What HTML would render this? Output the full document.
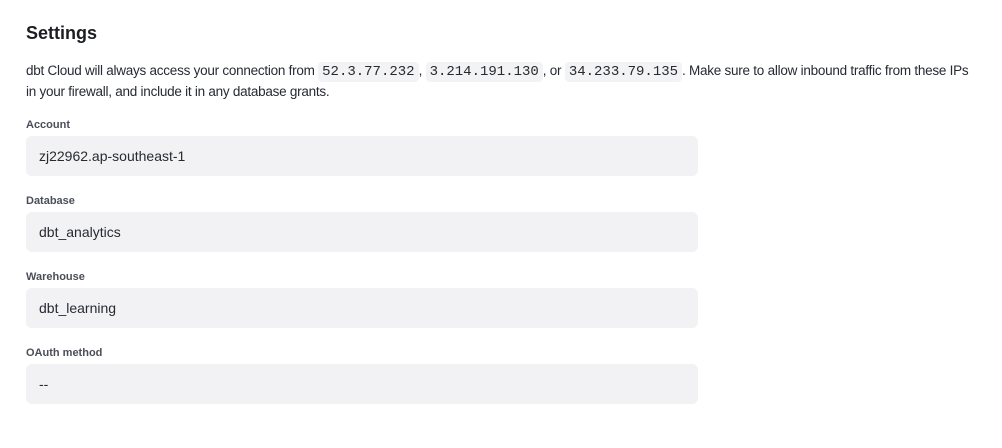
<!DOCTYPE html>
<html><head><style>
body{margin:0;background:#fff;font-family:"Liberation Sans",sans-serif;color:#1c1e21;}
.wrap{position:absolute;left:26px;top:0;width:980px}
h1{position:absolute;top:23px;left:0;margin:0;font-size:18px;font-weight:bold;color:#1c1e21}
.p{position:absolute;top:61px;left:0;font-size:13.5px;line-height:20px;letter-spacing:-0.25px;color:#262a33;white-space:nowrap}
code{font-family:"Liberation Mono",monospace;font-size:14px;background:#f3f3f5;border-radius:4px;padding:2px 4px;color:#262a33;letter-spacing:0}
.l{position:absolute;left:0;font-size:11px;font-weight:bold;color:#4a4f57}
.i{position:absolute;left:0;width:672px;height:40px;background:#f2f2f4;border-radius:6px;font-size:14px;line-height:40px;box-sizing:border-box;padding-left:13px;color:#262a33}
</style></head><body><div class="wrap">
<h1>Settings</h1>
<div class="p">dbt Cloud will always access your connection from <code>52.3.77.232</code>, <code>3.214.191.130</code>, or <code>34.233.79.135</code>. Make sure to allow inbound traffic from these IPs<br>in your firewall, and include it in any database grants.</div>
<div class="l" style="top:119px">Account</div><div class="i" style="top:136px">zj22962.ap-southeast-1</div>
<div class="l" style="top:195px">Database</div><div class="i" style="top:212px">dbt_analytics</div>
<div class="l" style="top:271px">Warehouse</div><div class="i" style="top:288px">dbt_learning</div>
<div class="l" style="top:347px">OAuth method</div><div class="i" style="top:364px">--</div>
</div></body></html>
